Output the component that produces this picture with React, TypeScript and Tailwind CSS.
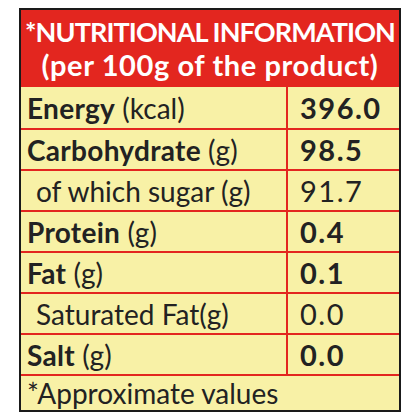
import React from "react";

const rows: { label: string; unit: string; value: string; bold: boolean; indent?: boolean }[] = [
  { label: "Energy", unit: " (kcal)", value: "396.0", bold: true },
  { label: "Carbohydrate", unit: " (g)", value: "98.5", bold: true },
  { label: "of which sugar (g)", unit: "", value: "91.7", bold: false, indent: true },
  { label: "Protein", unit: " (g)", value: "0.4", bold: true },
  { label: "Fat", unit: " (g)", value: "0.1", bold: true },
  { label: "Saturated Fat(g)", unit: "", value: "0.0", bold: false, indent: true },
  { label: "Salt", unit: " (g)", value: "0.0", bold: true },
];

export default function App() {
  return (
    <div className="w-[420px] h-[420px] bg-white pt-[8px] pl-[19px]" style={{ fontFamily: "Lato, 'Liberation Sans', sans-serif" }}>
      <div className="w-[382px] border-2 border-[#1a1a1a] bg-[#f8f1a6]">
        <div className="bg-[#e3261f] h-[77px] flex flex-col items-center justify-center text-white font-bold leading-none whitespace-nowrap">
          <div className="text-[27px] tracking-[-0.9px]">*NUTRITIONAL INFORMATION</div>
          <div className="text-[29px] tracking-[0.6px] mt-[5px]">(per 100g of the product)</div>
        </div>
        {rows.map((r, i) => (
          <div key={i} className={`flex h-[41px] border-[#e3261f] ${i === 0 ? "border-t-0" : "border-t-2"}`}>
            <div className={`w-[267px] border-r-2 border-[#e3261f] flex items-center text-[28px] text-[#222] whitespace-nowrap ${r.indent ? "pl-[15px]" : "pl-[6px]"}`}>
              {r.bold ? (
                <>
                  <span className="font-bold tracking-[0.3px]">{r.label}</span>
                  <span className="whitespace-pre">{r.unit}</span>
                </>
              ) : (
                <span>{r.label}</span>
              )}
            </div>
            <div className={`flex-1 flex items-center pl-[12px] text-[29px] tracking-[1.5px] text-[#222] ${r.bold ? "font-bold" : ""}`}>{r.value}</div>
          </div>
        ))}
        <div className="h-[36px] border-t-2 border-[#e3261f] flex items-center pl-[6px] text-[28px] text-[#222] whitespace-nowrap">*Approximate values</div>
      </div>
    </div>
  );
}
